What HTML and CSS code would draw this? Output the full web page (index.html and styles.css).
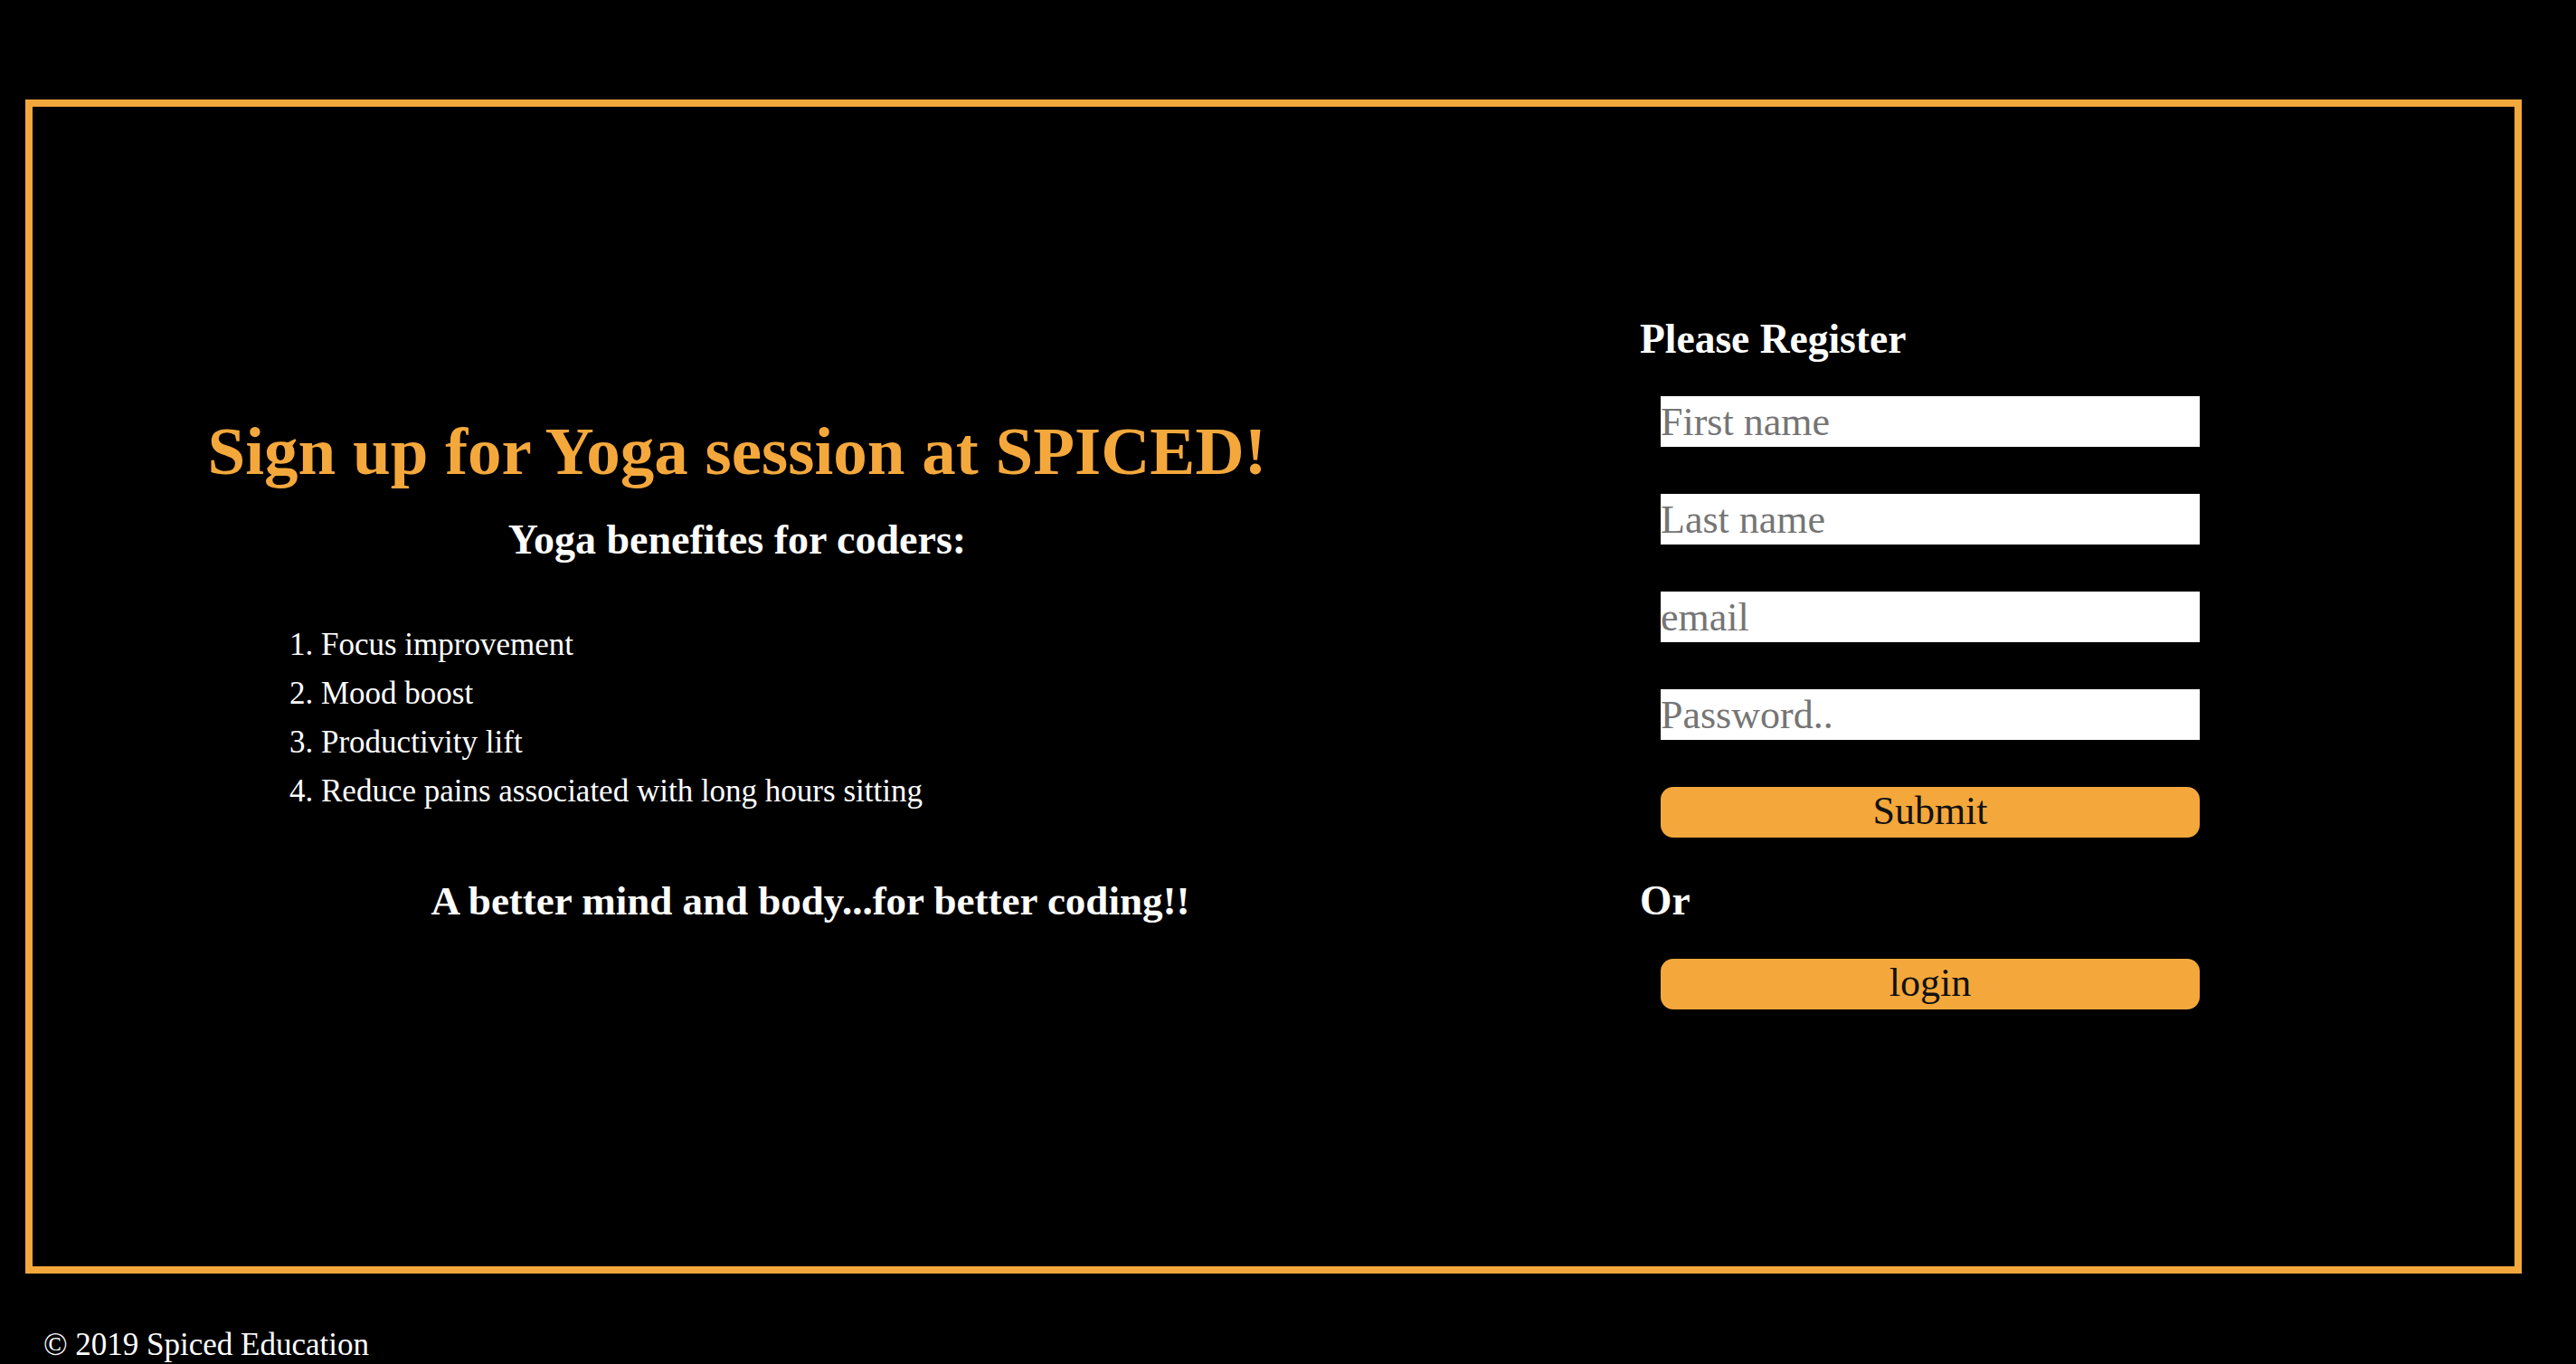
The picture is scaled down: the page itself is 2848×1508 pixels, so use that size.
FILE: index.html
```html
<!DOCTYPE html>
<html lang="en">
<head>
<meta charset="utf-8">
<title>Yoga at SPICED</title>
<link rel="stylesheet" href="styles.css">
</head>
<body>
<main class="frame">
  <section class="intro">
    <h1 class="title">Sign up for Yoga session at SPICED!</h1>
    <h3 class="subtitle">Yoga benefites for coders:</h3>
    <ol class="benefits">
      <li>Focus improvement</li>
      <li>Mood boost</li>
      <li>Productivity lift</li>
      <li>Reduce pains associated with long hours sitting</li>
    </ol>
    <h3 class="tagline">A better mind and body...for better coding!!</h3>
  </section>
  <section class="register">
    <h3 class="reg-title">Please Register</h3>
    <form class="reg-form">
      <input class="field" type="text" placeholder="First name">
      <input class="field" type="text" placeholder="Last name">
      <input class="field" type="email" placeholder="email">
      <input class="field" type="password" placeholder="Password..">
      <button class="btn" type="submit">Submit</button>
    </form>
    <h3 class="or">Or</h3>
    <button class="btn login" type="button">login</button>
  </section>
</main>
<footer class="footer">© 2019 Spiced Education</footer>
</body>
</html>
```

FILE: styles.css
```css
html, body {
  margin: 0;
  padding: 0;
  background: #000;
}

body {
  font-family: "Liberation Serif", "DejaVu Serif", serif;
  color: #fff;
  overflow: hidden;
}

.frame {
  box-sizing: border-box;
  margin: 110px 60px 0 28px;
  height: 1298px;
  border: 8px solid #f4a83c;
  display: flex;
  align-items: flex-start;
}

.intro {
  width: 1558px;
  flex: none;
  padding-top: 337px;
  text-align: center;
}

.title {
  margin: 0;
  font-size: 75px;
  line-height: 88px;
  font-weight: bold;
  color: #f4a83c;
}

.subtitle {
  margin: 27px 0 0;
  font-size: 46px;
  line-height: 54px;
  font-weight: bold;
}

.benefits {
  margin: 62px 0 0;
  padding-left: 319px;
  text-align: left;
  font-size: 35px;
  line-height: 54px;
}

.tagline {
  margin: 67px 0 0;
  padding-left: 162px;
  font-size: 45px;
  line-height: 54px;
  font-weight: bold;
}

.register {
  flex: 1;
  padding-top: 230px;
  padding-left: 219px;
}

.reg-title,
.or {
  margin: 0;
  font-size: 45.5px;
  line-height: 54px;
  font-weight: bold;
}

.reg-form {
  margin: 36px 0 0 23px;
  display: flex;
  flex-direction: column;
  gap: 52px;
  width: 596px;
}

.field {
  box-sizing: border-box;
  width: 596px;
  height: 56px;
  margin: 0;
  padding: 0;
  border: none;
  outline: none;
  background: #fff;
  font-family: "Liberation Serif", "DejaVu Serif", serif;
  font-size: 44px;
  color: #000;
}

.field::placeholder {
  color: #757575;
}

.btn {
  box-sizing: border-box;
  width: 596px;
  height: 56px;
  margin: 0;
  padding: 0 0 3px;
  border: none;
  border-radius: 14px;
  background: #f4a83c;
  font-family: "Liberation Serif", "DejaVu Serif", serif;
  font-size: 44px;
  color: #111;
}

.or {
  margin-top: 43px;
}

.login {
  display: block;
  margin: 37px 0 0 23px;
}

.footer {
  margin: 59px 0 0 48px;
  font-size: 35px;
  line-height: 40px;
}
```
